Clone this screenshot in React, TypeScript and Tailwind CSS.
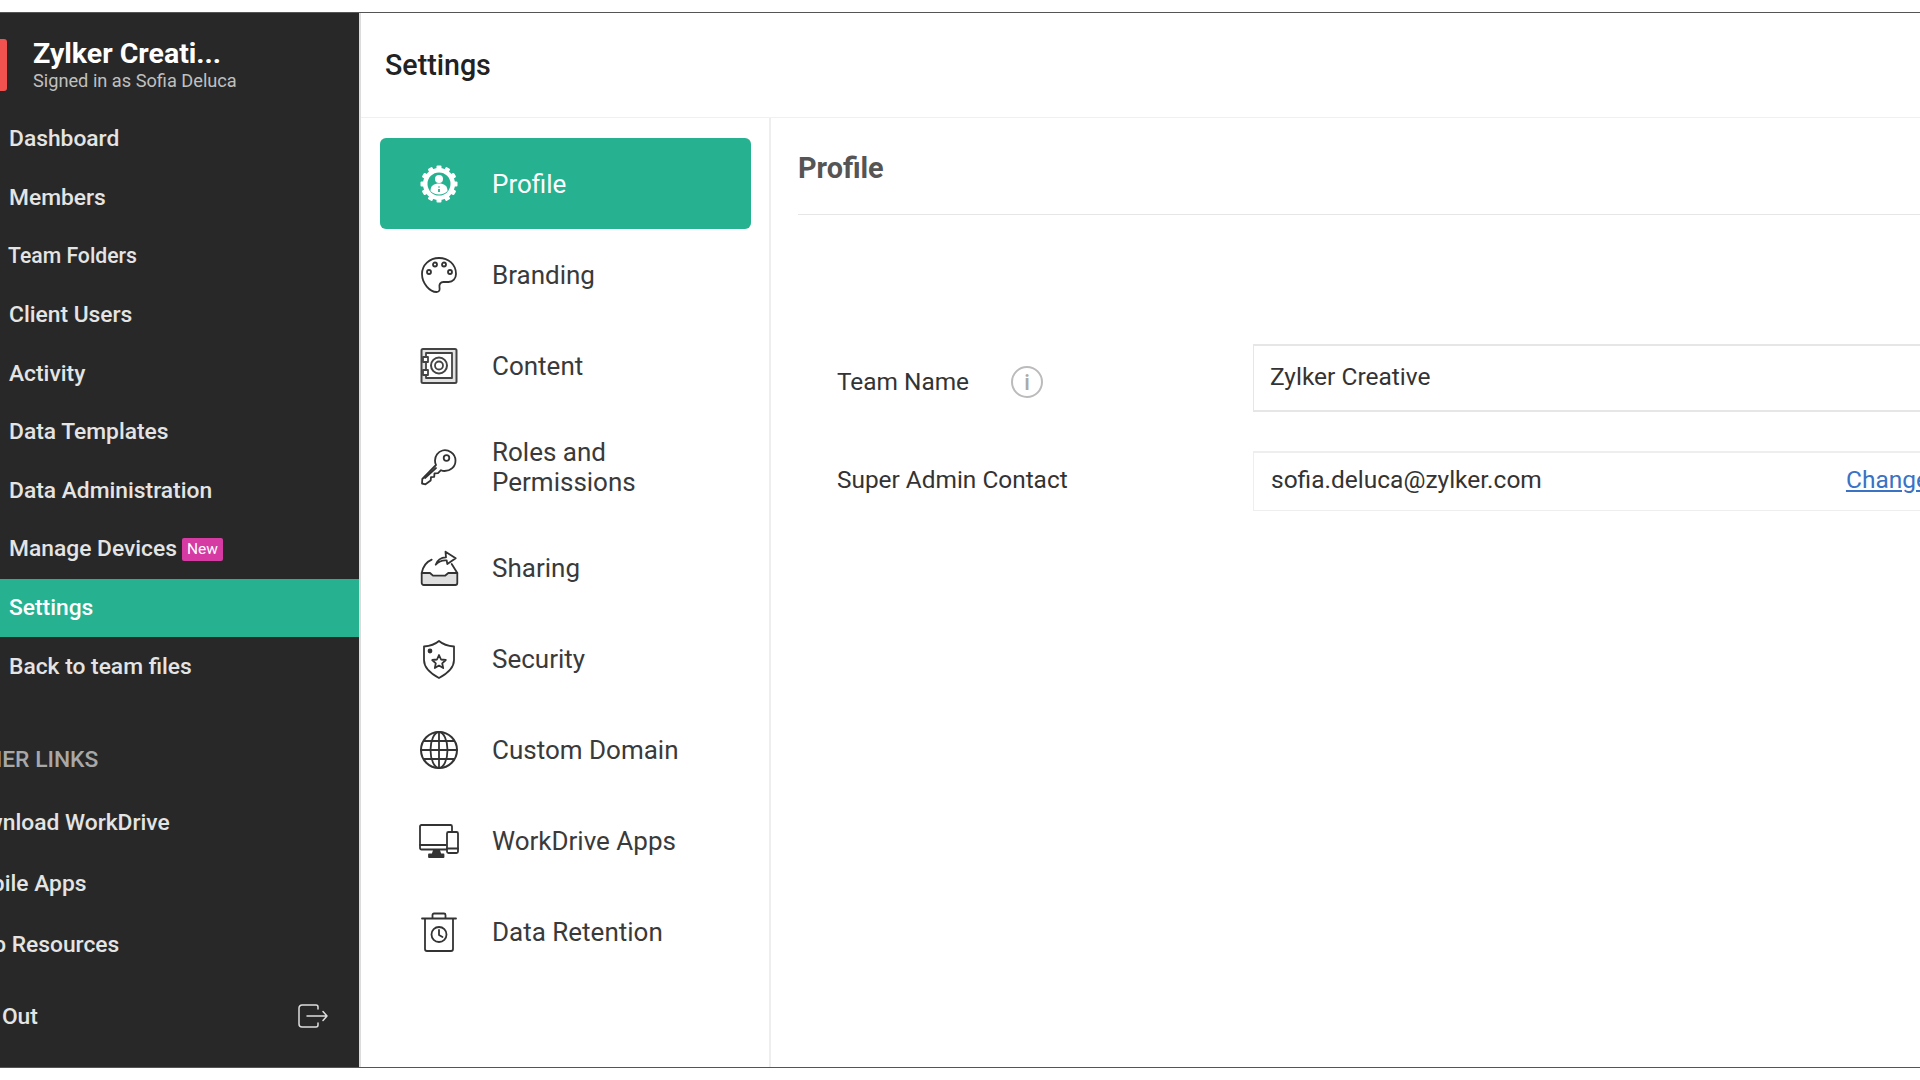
const font = "font-['Roboto',sans-serif]";

const mainLinks = [
  { label: "Dashboard" },
  { label: "Members" },
  { label: "Team Folders", small: true },
  { label: "Client Users" },
  { label: "Activity" },
  { label: "Data Templates" },
  { label: "Data Administration" },
  { label: "Manage Devices", badge: true },
  { label: "Settings", active: true },
  { label: "Back to team files" },
];

function Ic({ children }: { children: React.ReactNode }) {
  return (
    <svg width="42" height="42" viewBox="0 0 42 42" fill="none" stroke="#333" strokeWidth="1.8" strokeLinecap="round" strokeLinejoin="round">
      {children}
    </svg>
  );
}

function ProfileIcon() {
  return (
    <svg width="42" height="42" viewBox="0 0 42 42">
      <g fill="#fff">
        {[0, 30, 60, 90, 120, 150, 180, 210, 240, 270, 300, 330].map((a) => (
          <rect key={a} x="18.5" y="2.5" width="5" height="5" rx="1" transform={`rotate(${a} 21 21)`} />
        ))}
        <circle cx="21" cy="21" r="16" />
      </g>
      <circle cx="21" cy="21" r="11.5" fill="#26b290" />
      <circle cx="21" cy="16" r="4" fill="#fff" />
      <path d="M12.5 28c0-5.500 3.500-7.500 8.500-7.500s8.500 2 8.500 7.500c-2 2-5 3.500-8.500 3.500s-6.500-1.500-8.500-3.500z" fill="#fff" />
      <path d="M21 23.500v1M21 26v3" stroke="#26b290" strokeWidth="1.800" />
    </svg>
  );
}

function BrandingIcon() {
  return (
    <Ic>
      <path d="M21 4C11.500 4 4 11 4 20c0 9.500 8 18 14.500 18 3 0 3.500-2 3-4.500-.6-3 .8-5.500 4-5.500h5c4.500 0 7.500-3.500 7.500-8C38 10.500 30.500 4 21 4z" />
      <circle cx="11" cy="18" r="2" />
      <circle cx="17" cy="10.500" r="2" />
      <circle cx="26" cy="10.500" r="2" />
      <circle cx="32" cy="18" r="2" />
    </Ic>
  );
}

function ContentIcon() {
  return (
    <Ic>
      <rect x="3.500" y="4" width="35" height="34" rx="1.500" fill="#e4e4e4" stroke="#444" strokeWidth="2" />
      <rect x="8" y="8" width="26" height="25" fill="#fff" stroke="#444" />
      <circle cx="21" cy="20.500" r="8" stroke="#444" strokeWidth="2" />
      <circle cx="21" cy="20.500" r="4" stroke="#444" />
      <path d="M5 12h5v5H5zM5 25h5v5H5z" fill="#fff" stroke="#444" />
    </Ic>
  );
}

function KeyIcon() {
  return (
    <Ic>
      <path d="M24.500 4.500c5.500-1.500 13 3 13 10 0 6.500-5 10.500-11 10.500-1.500 0-2.500-.3-3.500-.8l-3 3-3.500.2-.3 3.500-3.200.3-.3 3.300-5.200 3.800-3.500-.8.300-4.500L18 19c-.8-1.500-1-3-1-4.500 0-4.500 3-8.700 7.500-10z" />
      <circle cx="28.500" cy="12" r="2.800" />
      <path d="M7 32l11-10" />
    </Ic>
  );
}

function SharingIcon() {
  return (
    <Ic>
      <g transform="translate(-1 0)">
        <path d="M4.700 26h8.300l3 2.700h12l3.300-2.700h9V36a2 2 0 0 1-2 2H6.700a2 2 0 0 1-2-2z" fill="#dfdfdf" />
        <path d="M4.700 26C6 20 9 15 14.700 12.700M40.300 26L34.700 17" />
        <path d="M18.700 17.700c1.500-4.500 5-7.200 10.300-7.400l-.5-5.600 10.200 6.600-8.400 5.700-.6-3.600c-4-.4-8 1-11 4.300z" />
      </g>
    </Ic>
  );
}

function SecurityIcon() {
  return (
    <Ic>
      <path d="M21 3c3.500 3 9 5 15 5.500V22c0 8-6.500 13.500-15 18C12.500 35.500 6 30 6 22V8.500C12 8 17.500 6 21 3z" />
      <circle cx="12" cy="13" r="1.500" fill="#333" />
      <path d="M21 17l2 4.500 4.800.5-3.600 3.300 1 4.800-4.200-2.500-4.200 2.500 1-4.800-3.600-3.300 4.800-.5z" strokeWidth="1.800" />
    </Ic>
  );
}

function GlobeIcon() {
  return (
    <Ic>
      <circle cx="21" cy="21" r="18" strokeWidth="2" />
      <ellipse cx="21" cy="21" rx="8.500" ry="18" />
      <path d="M21 3v36M3 21h36M6 12h30M6 30h30" />
    </Ic>
  );
}

function AppsIcon() {
  return (
    <Ic>
      <g transform="translate(0 1)">
        <path d="M28 28.500H3.500a1.500 1.500 0 0 1-1.500-1.500V5.500A1.500 1.500 0 0 1 3.500 4h29A1.500 1.500 0 0 1 34 5.500v4" />
        <path d="M2 24h26" />
        <path d="M16 29h5l1.500 4.500h3v2.500H11v-2.500h3.500z" fill="#333" />
        <rect x="29" y="11" width="11" height="21" rx="1.500" />
        <path d="M29 27.500h11" />
      </g>
    </Ic>
  );
}

function RetentionIcon() {
  return (
    <Ic>
      <path d="M4 7.500h34" />
      <path d="M14.500 7V4a1.500 1.500 0 0 1 1.500-1.500h10A1.500 1.500 0 0 1 27.500 4v3" />
      <path d="M7 8v30a2 2 0 0 0 2 2h24a2 2 0 0 0 2-2V8" />
      <circle cx="21" cy="23.500" r="7.500" />
      <path d="M21 19v5l3.500 2" />
    </Ic>
  );
}

const settingsItems = [
  { label: "Profile", icon: <ProfileIcon />, active: true },
  { label: "Branding", icon: <BrandingIcon /> },
  { label: "Content", icon: <ContentIcon /> },
  { label: "Roles and Permissions", icon: <KeyIcon />, tall: true },
  { label: "Sharing", icon: <SharingIcon /> },
  { label: "Security", icon: <SecurityIcon /> },
  { label: "Custom Domain", icon: <GlobeIcon /> },
  { label: "WorkDrive Apps", icon: <AppsIcon /> },
  { label: "Data Retention", icon: <RetentionIcon /> },
];

export default function App() {
  return (
    <div className={`${font} h-screen w-full overflow-hidden bg-white pt-3 pb-3`}>
      <div className="flex h-full border-t border-b border-[#555]">
        {/* Sidebar */}
        <aside className="flex w-[359px] shrink-0 flex-col overflow-hidden bg-[#282828] text-[22.8px] leading-[34px] font-medium text-[#e4e4e4]">
          <div className="flex h-[97px] shrink-0 items-start gap-[26px] pt-[26px]">
            <div className="h-[52px] w-[7px] shrink-0 rounded-r-[3px] bg-[#f0524f]" />
            <div>
              <div className="text-[28.5px] leading-[30px] font-bold text-white">Zylker Creati...</div>
              <div className="text-[18.2px] leading-[24px] font-normal text-[#c0c0c0]">Signed in as Sofia Deluca</div>
            </div>
          </div>

          {mainLinks.map((l) => (
            <div key={l.label} className={`flex h-[58.6px] shrink-0 items-center pl-[9px] ${l.active ? "bg-[#26b290] text-white" : ""} ${l.small ? "-ml-[1px] text-[21.2px]" : ""}`}>
              {l.label}
              {l.badge && <span className="ml-[5px] rounded-[2px] bg-[#d63ba4] px-[5px] text-[15.5px] leading-[23px] font-normal text-white">New</span>}
            </div>
          ))}

          <div className="mt-[47px] -ml-[43px] text-[#a8a8a8]">OTHER LINKS</div>
          <div className="mt-[29px] -ml-[42px]">Download WorkDrive</div>
          <div className="mt-[27px] -ml-[41px]">Mobile Apps</div>
          <div className="mt-[27px] -ml-[41px]">Help Resources</div>
          <div className="mt-[38px] flex items-center justify-between pr-[31px] -ml-[49px]">
            <span>Sign Out</span>
            <svg className="-mt-[2px]" width="30" height="24" viewBox="0 0 30 24" fill="none" stroke="#ddd" strokeWidth="1.5" strokeLinecap="round" strokeLinejoin="round">
              <path d="M20 5V3a2 2 0 0 0-2-2H4a3 3 0 0 0-3 3v16a3 3 0 0 0 3 3h14a2 2 0 0 0 2-2v-2" />
              <path d="M9 12h20M25 7.500l4 4.500-4 4.500" />
            </svg>
          </div>
        </aside>

        {/* Main */}
        <main className="flex min-w-0 flex-1 flex-col border-l-2 border-[#dcdcdc]">
          <div className="flex h-[105px] shrink-0 items-center border-b border-[#f0f0f0] pl-[24px] text-[28.6px] font-medium text-[#222]">Settings</div>
          <div className="flex min-h-0 flex-1">
            <nav className="w-[410px] shrink-0 border-r-2 border-[#eeeeee] pt-[20px] pl-[19px]">
              {settingsItems.map((it) => (
                <div
                  key={it.label}
                  className={`flex w-[371px] items-center rounded-[6px] pl-[38px] text-[26px] ${it.tall ? "h-[111px]" : "h-[91px]"} ${it.active ? "bg-[#26b290] text-white" : "text-[#3a3a3a]"}`}
                >
                  <div className="flex w-[42px] shrink-0 justify-center">{it.icon}</div>
                  <span className="mt-[1px] ml-[32px] w-[220px] leading-[30px]">{it.label}</span>
                </div>
              ))}
            </nav>

            <section className="min-w-0 flex-1 pl-[27px]">
              <div className="flex h-[97px] items-center border-b border-[#e6e6e6] pt-[5px] text-[28.8px] font-bold text-[#555]">Profile</div>
              <div className="flex pt-[129px]">
                <div className="ml-[39px] flex h-[68px] w-[416px] shrink-0 items-center pt-[8px] text-[24.4px] text-[#333]">
                  <span>Team Name</span>
                  <span className="ml-[42px] flex h-[32px] w-[32px] items-center justify-center rounded-full border-2 border-[#bbbbbb] text-[22px] font-medium text-[#aaa]">i</span>
                </div>
                <div className="flex h-[68px] flex-1 items-center border-t-2 border-b-2 border-l border-[#e6e6e6] pb-[2px] pl-[16px] text-[24.5px] text-[#333]">Zylker Creative</div>
              </div>
              <div className="mt-[39px] flex">
                <div className="ml-[39px] flex h-[60px] w-[416px] shrink-0 items-center pb-[2px] text-[24.4px] text-[#333]">Super Admin Contact</div>
                <div className="flex h-[60px] flex-1 items-center justify-between overflow-hidden border-t-2 border-b border-l border-[#eeeeee] pb-[2px] pl-[17px] text-[24.5px] text-[#333]">
                  <span>sofia.deluca@zylker.com</span>
                  <a className="-mr-[9px] text-[#3a72c4] underline">Change</a>
                </div>
              </div>
            </section>
          </div>
        </main>
      </div>
    </div>
  );
}
